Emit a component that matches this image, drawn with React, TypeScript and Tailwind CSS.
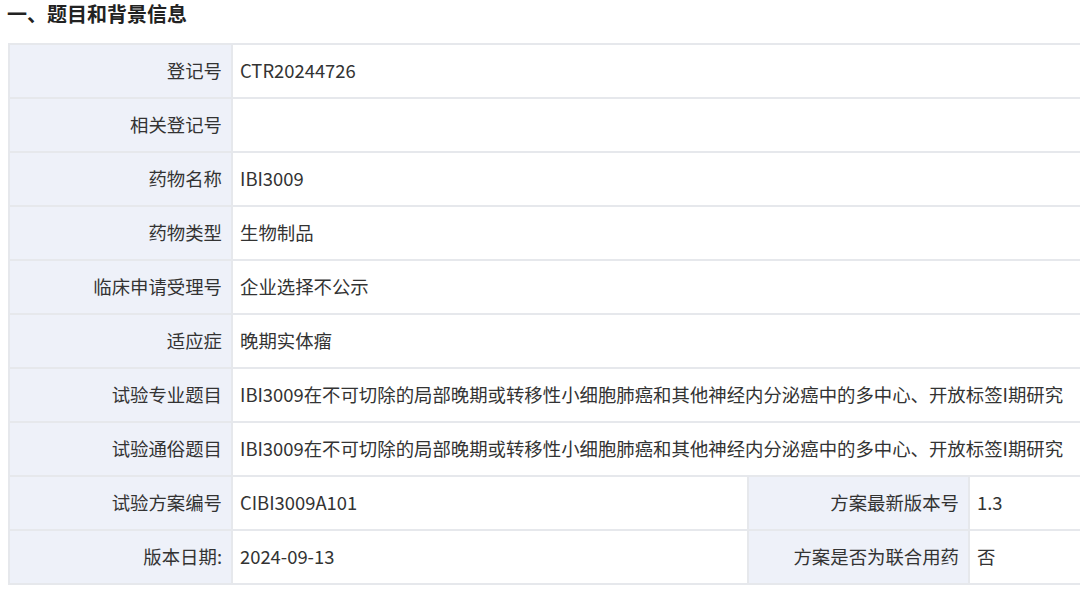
import React from "react";

const font = { fontFamily: '"Noto Sans CJK SC", "Noto Sans", sans-serif' };

const rows: [string, string][] = [
  ["登记号", "CTR20244726"],
  ["相关登记号", ""],
  ["药物名称", "IBI3009"],
  ["药物类型", "生物制品"],
  ["临床申请受理号", "企业选择不公示"],
  ["适应症", "晚期实体瘤"],
  ["试验专业题目", "IBI3009在不可切除的局部晚期或转移性小细胞肺癌和其他神经内分泌癌中的多中心、开放标签I期研究"],
  ["试验通俗题目", "IBI3009在不可切除的局部晚期或转移性小细胞肺癌和其他神经内分泌癌中的多中心、开放标签I期研究"],
];

const th = "bg-[#eef1f9] border-2 border-[#e6e8ec] text-right pr-[9px] font-normal h-[54px] align-middle whitespace-nowrap";
const td = "bg-white border-2 border-[#e6e8ec] text-left pl-[7px] h-[54px] align-middle whitespace-nowrap";

export default function App() {
  return (
    <div className="w-[1080px] h-[592px] overflow-hidden bg-white text-[#333333]" style={font}>
      <h2 className="text-[20px] font-bold leading-[26px] pt-[1px] pl-[7px] text-[#222222]">一、题目和背景信息</h2>
      <table className="mt-[16px] ml-[8px] border-collapse text-[18.4px] w-[1100px] table-fixed">
        <colgroup>
          <col className="w-[223px]" />
          <col className="w-[516px]" />
          <col className="w-[221px]" />
          <col />
        </colgroup>
        <tbody>
          {rows.map(([k, v]) => (
            <tr key={k}>
              <th className={th}>{k}</th>
              <td className={td} colSpan={3}>{v}</td>
            </tr>
          ))}
          <tr>
            <th className={th}>试验方案编号</th>
            <td className={td}>CIBI3009A101</td>
            <th className={th}>方案最新版本号</th>
            <td className={td}>1.3</td>
          </tr>
          <tr>
            <th className={th}>版本日期:</th>
            <td className={td}>2024-09-13</td>
            <th className={th}>方案是否为联合用药</th>
            <td className={td}>否</td>
          </tr>
        </tbody>
      </table>
    </div>
  );
}
